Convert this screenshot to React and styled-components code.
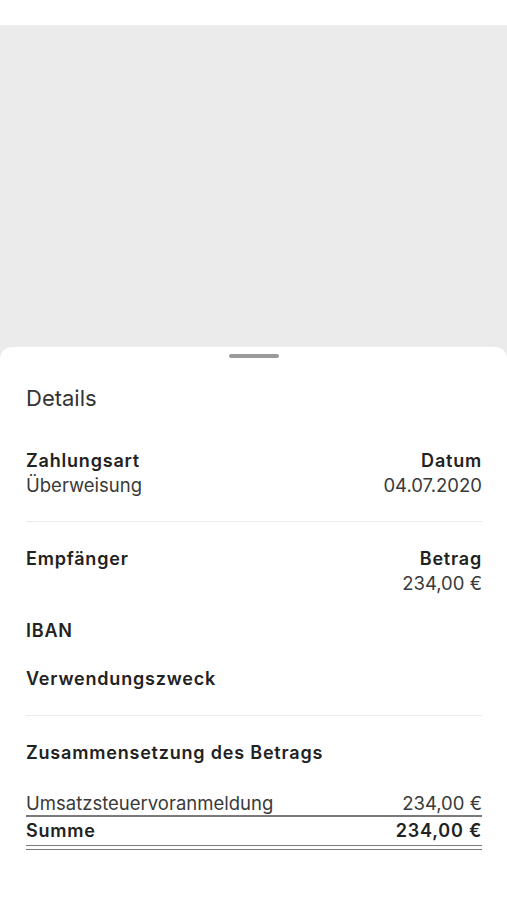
import React from "react";
import styled, { createGlobalStyle } from "styled-components";

const GlobalStyle = createGlobalStyle`
  body {
    margin: 0;
    background: #ffffff;
    font-family: Inter, "Noto Sans", "Liberation Sans", sans-serif;
    -webkit-font-smoothing: antialiased;
  }
`;

const Screen = styled.div`
  width: 507px;
  height: 900px;
  display: flex;
  flex-direction: column;
  background: #ffffff;
  overflow: hidden;
`;

const StatusBar = styled.div`
  height: 25px;
  flex-shrink: 0;
  background: #ffffff;
`;

const Backdrop = styled.div`
  height: 334px;
  flex-shrink: 0;
  background: #ebebeb;
`;

const Sheet = styled.div`
  flex: 1;
  background: #ffffff;
  margin-top: -12px;
  border-radius: 12px 12px 0 0;
  padding: 0 25px 0 26px;
  display: flex;
  flex-direction: column;
`;

const Handle = styled.div`
  width: 50px;
  height: 4px;
  border-radius: 2px;
  background: #9a9a9a;
  margin: 7px auto 0;
`;

const Title = styled.h2`
  margin: 26px 0 0;
  font-size: 22px;
  line-height: 28px;
  font-weight: 400;
  color: #333333;
`;

const Section = styled.div`
  display: flex;
  flex-direction: column;
  gap: 24px;
  padding: ${({ first, last }) =>
    first ? "37px 0 24px" : last ? "25px 0 0" : "25px 0 24px"};
  border-bottom: ${({ last }) => (last ? "none" : "1px solid #ececec")};
`;

const Row = styled.div`
  display: flex;
  justify-content: space-between;
  align-items: flex-start;
`;

const Field = styled.div`
  display: flex;
  flex-direction: column;
  text-align: ${({ right }) => (right ? "right" : "left")};
`;

const Label = styled.span`
  font-size: 18px;
  line-height: 24px;
  font-weight: 600;
  letter-spacing: 0.8px;
  color: #222222;
`;

const Value = styled.span`
  font-size: 18.5px;
  line-height: 24px;
  font-weight: 400;
  color: #3a3a3a;
`;

const Breakdown = styled.div`
  margin-top: 3px;
  display: flex;
  flex-direction: column;
`;

const Line = styled.div`
  display: flex;
  justify-content: space-between;
  font-size: ${({ total }) => (total ? "18px" : "18.5px")};
  line-height: ${({ total }) => (total ? "24px" : "23px")};
  font-weight: ${({ total }) => (total ? 600 : 400)};
  letter-spacing: ${({ total }) => (total ? "0.8px" : "0")};
  color: ${({ total }) => (total ? "#222222" : "#3a3a3a")};
  border-bottom: ${({ total }) => (total ? "1px solid #7a7a7a" : "2px solid #7a7a7a")};
  padding-bottom: ${({ total }) => (total ? "2px" : "0")};
  margin-top: ${({ total }) => (total ? "2px" : "0")};
`;

const TotalWrap = styled.div`
  border-bottom: 1px solid #7a7a7a;
  padding-bottom: 3px;
`;

export default function App() {
  return (
    <>
      <GlobalStyle />
      <Screen>
        <StatusBar />
        <Backdrop />
        <Sheet>
          <Handle />
          <Title>Details</Title>

          <Section first>
            <Row>
              <Field>
                <Label>Zahlungsart</Label>
                <Value>Überweisung</Value>
              </Field>
              <Field right>
                <Label>Datum</Label>
                <Value>04.07.2020</Value>
              </Field>
            </Row>
          </Section>

          <Section>
            <Row>
              <Field>
                <Label>Empfänger</Label>
              </Field>
              <Field right>
                <Label>Betrag</Label>
                <Value>234,00 €</Value>
              </Field>
            </Row>
            <Field>
              <Label>IBAN</Label>
            </Field>
            <Field>
              <Label>Verwendungszweck</Label>
            </Field>
          </Section>

          <Section last>
            <Label>Zusammensetzung des Betrags</Label>
            <Breakdown>
              <Line>
                <span>Umsatzsteuervoranmeldung</span>
                <span>234,00 €</span>
              </Line>
              <TotalWrap>
                <Line total>
                  <span>Summe</span>
                  <span>234,00 €</span>
                </Line>
              </TotalWrap>
            </Breakdown>
          </Section>
        </Sheet>
      </Screen>
    </>
  );
}
